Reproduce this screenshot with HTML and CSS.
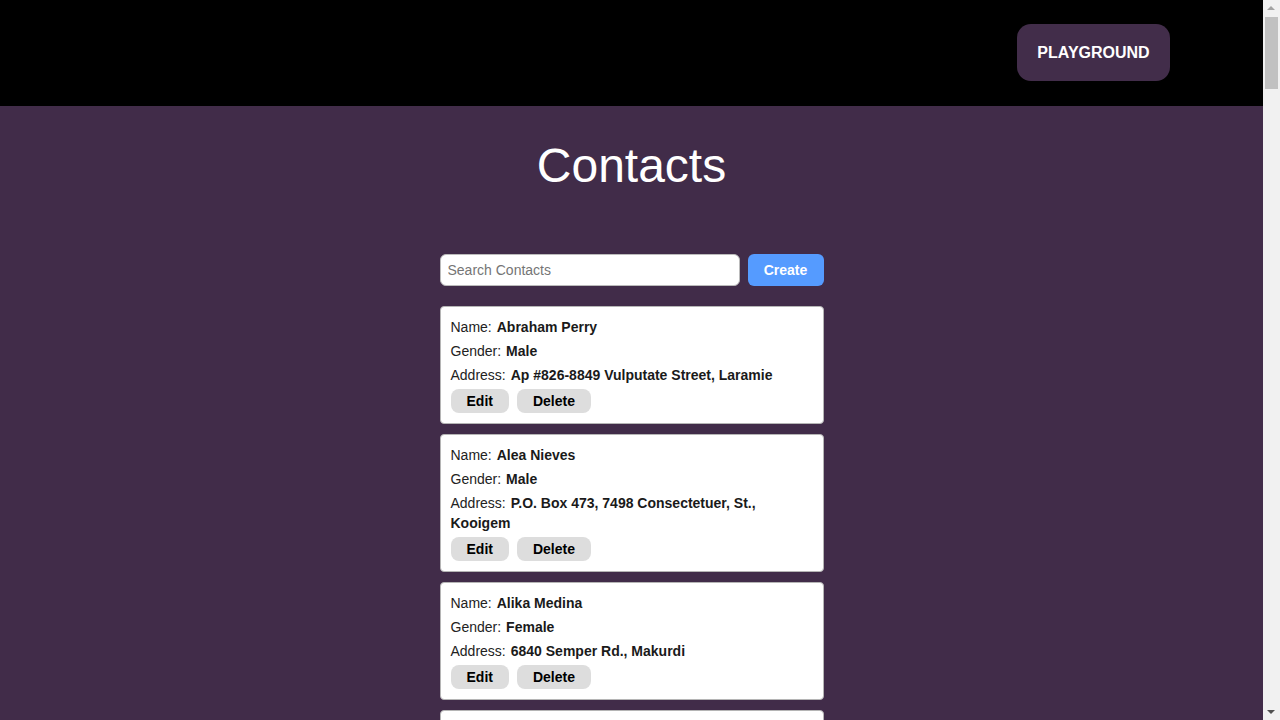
FILE: index.html
```html
<!DOCTYPE html>
<html lang="en">
<head>
<meta charset="utf-8">
<title>Contacts</title>
<link rel="stylesheet" href="styles.css">
</head>
<body>
<header class="topbar">
  <button class="play-btn">PLAYGROUND</button>
</header>
<main class="page">
  <h1 class="title">Contacts</h1>
  <section class="contacts">
    <div class="toolbar">
      <input class="search" type="text" placeholder="Search Contacts">
      <button class="create-btn">Create</button>
    </div>
    <div class="card">
      <p class="row"><span class="label">Name:</span><b>Abraham Perry</b></p>
      <p class="row"><span class="label">Gender:</span><b>Male</b></p>
      <p class="row"><span class="label">Address:</span><b>Ap #826-8849 Vulputate Street, Laramie</b></p>
      <div class="actions"><button class="act">Edit</button><button class="act">Delete</button></div>
    </div>
    <div class="card">
      <p class="row"><span class="label">Name:</span><b>Alea Nieves</b></p>
      <p class="row"><span class="label">Gender:</span><b>Male</b></p>
      <p class="row"><span class="label">Address:</span><b>P.O. Box 473, 7498 Consectetuer, St., Kooigem</b></p>
      <div class="actions"><button class="act">Edit</button><button class="act">Delete</button></div>
    </div>
    <div class="card">
      <p class="row"><span class="label">Name:</span><b>Alika Medina</b></p>
      <p class="row"><span class="label">Gender:</span><b>Female</b></p>
      <p class="row"><span class="label">Address:</span><b>6840 Semper Rd., Makurdi</b></p>
      <div class="actions"><button class="act">Edit</button><button class="act">Delete</button></div>
    </div>
    <div class="card">
      <p class="row"><span class="label">Name:</span><b>Amela Hardy</b></p>
      <p class="row"><span class="label">Gender:</span><b>Female</b></p>
      <p class="row"><span class="label">Address:</span><b>924-1430 Aenean Ave, Huntsville</b></p>
      <div class="actions"><button class="act">Edit</button><button class="act">Delete</button></div>
    </div>
    <div class="card">
      <p class="row"><span class="label">Name:</span><b>Anthony Reid</b></p>
      <p class="row"><span class="label">Gender:</span><b>Male</b></p>
      <p class="row"><span class="label">Address:</span><b>3515 Eget St., Bremen</b></p>
      <div class="actions"><button class="act">Edit</button><button class="act">Delete</button></div>
    </div>
  </section>
</main>
<div class="scrollbar" aria-hidden="true">
  <span class="arrow-up"></span>
  <span class="thumb"></span>
  <span class="arrow-down"></span>
</div>
</body>
</html>
```
FILE: styles.css
```css
html, body {
  margin: 0;
  padding: 0;
}
body {
  background: #412c49;
  font-family: "Liberation Sans", Arial, sans-serif;
  color: #222;
  margin-right: 17px;
}
.topbar {
  background: #000;
  height: 106px;
  box-sizing: border-box;
  display: flex;
  justify-content: flex-end;
  align-items: flex-start;
  padding: 24px 93px 0 0;
}
.play-btn {
  background: #422d4a;
  color: #fff;
  border: none;
  border-radius: 14px;
  height: 57px;
  width: 153px;
  font-family: "Liberation Sans", Arial, sans-serif;
  font-weight: bold;
  font-size: 16px;
  padding: 0;
}
.page {
  display: flex;
  flex-direction: column;
  align-items: center;
}
.title {
  margin: 32px 0 0;
  font-size: 48px;
  font-weight: normal;
  line-height: 55px;
  color: #fff;
}
.contacts {
  width: 384px;
  margin-top: 61px;
  display: flex;
  flex-direction: column;
  gap: 10px;
  padding-bottom: 40px;
}
.toolbar {
  display: flex;
  gap: 8px;
  margin-bottom: 10px;
}
.search {
  width: 300px;
  height: 32px;
  box-sizing: border-box;
  border: 1px solid #bbb;
  border-radius: 6px;
  padding: 0 7px;
  font-family: "Liberation Sans", Arial, sans-serif;
  font-size: 14px;
  background: #fff;
  outline: none;
}
.search::placeholder {
  color: #757575;
}
.create-btn {
  width: 76px;
  height: 32px;
  border: none;
  border-radius: 6px;
  background: #559bff;
  color: #fff;
  font-family: "Liberation Sans", Arial, sans-serif;
  font-weight: bold;
  font-size: 14px;
  padding: 0;
}
.card {
  background: #fff;
  border: 1px solid #b5b5b5;
  border-radius: 4px;
  padding: 10px;
  display: flex;
  flex-direction: column;
  gap: 4px;
}
.row {
  margin: 0;
  font-size: 14px;
  line-height: 20px;
  color: #222;
}
.label {
  margin-right: 5px;
}
.row b {
  color: #1a1a1a;
}
.actions {
  display: flex;
  gap: 8px;
}
.act {
  height: 24px;
  padding: 0 16px;
  border: none;
  border-radius: 8px;
  background: #ddd;
  color: #000;
  font-family: "Liberation Sans", Arial, sans-serif;
  font-weight: bold;
  font-size: 14px;
}
.scrollbar {
  position: fixed;
  top: 0;
  right: 0;
  width: 17px;
  height: 100vh;
  background: #f1f1f1;
}
.thumb {
  position: absolute;
  left: 2px;
  top: 17px;
  width: 13px;
  height: 72px;
  background: #c1c1c1;
}
.arrow-up, .arrow-down {
  position: absolute;
  left: 4px;
  width: 0;
  height: 0;
  border-left: 4px solid transparent;
  border-right: 4px solid transparent;
}
.arrow-up {
  top: 6px;
  border-bottom: 4px solid #a3a3a3;
}
.arrow-down {
  bottom: 6px;
  border-top: 4px solid #505050;
}
```
